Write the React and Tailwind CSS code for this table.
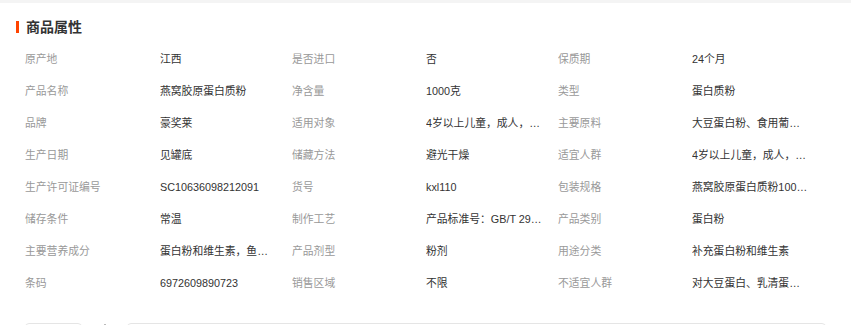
const rows = [
  ['原产地', '江西', '是否进口', '否', '保质期', '24个月'],
  ['产品名称', '燕窝胶原蛋白质粉', '净含量', '1000克', '类型', '蛋白质粉'],
  ['品牌', '豪奖莱', '适用对象', '4岁以上儿童，成人，老年人', '主要原料', '大豆蛋白粉、食用葡萄糖'],
  ['生产日期', '见罐底', '储藏方法', '避光干燥', '适宜人群', '4岁以上儿童，成人，老年人'],
  ['生产许可证编号', 'SC10636098212091', '货号', 'kxl110', '包装规格', '燕窝胶原蛋白质粉1000克'],
  ['储存条件', '常温', '制作工艺', '产品标准号：GB/T 29602', '产品类别', '蛋白粉'],
  ['主要营养成分', '蛋白粉和维生素，鱼胶原蛋白', '产品剂型', '粉剂', '用途分类', '补充蛋白粉和维生素'],
  ['条码', '6972609890723', '销售区域', '不限', '不适宜人群', '对大豆蛋白、乳清蛋白过敏者'],
]

export default function App() {
  return (
    <div
      className="h-[325px] w-[851px] overflow-hidden bg-white"
      style={{ fontFamily: '"Liberation Sans", "Noto Sans CJK SC", sans-serif' }}
    >
      <div className="h-[3px] bg-[#f4f4f4]" />
      {/* Title */}
      <div className="flex h-[40px] items-center pt-[8px] pl-[16px]">
        <span className="h-[12px] w-[3px] bg-[#ff4400]" />
        <h2 className="ml-[7px] text-[14px] font-bold text-[#333]">商品属性</h2>
      </div>

      {/* Attributes */}
      <div className="pl-[25px]">
        {rows.map((r, i) => (
          <div
            key={i}
            className="grid h-[32px] w-[800px] grid-cols-[135px_132px_134px_132px_134px_133px] items-center text-[10.8px]"
          >
            {r.map((t, j) => (
              <div
                key={j}
                className={`truncate pr-[15px] ${j % 2 ? 'text-[#333]' : 'text-[#999]'}`}
              >
                {t}
              </div>
            ))}
          </div>
        ))}
      </div>

      {/* next section, cut off */}
      <div className="mt-[24px] flex items-start pl-[25px]">
        <div className="h-[20px] w-[57px] rounded-sm border border-[#e5e5e5]" />
        <div className="ml-[22px] mt-[1px] h-[1px] w-[2px] bg-[#bbb]" />
        <div className="ml-[21px] h-[20px] w-[699px] rounded-sm border border-[#e5e5e5]" />
      </div>
    </div>
  )
}
